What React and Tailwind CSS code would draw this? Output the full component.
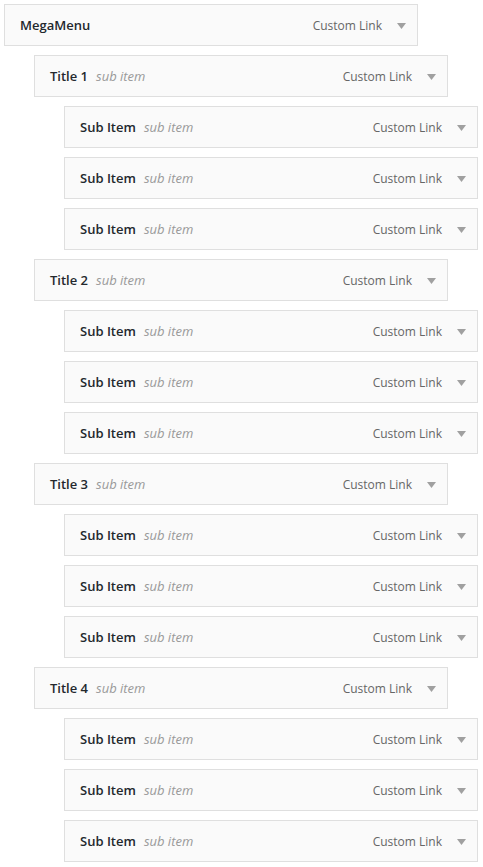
const tree = [
  { title: 'Title 1', subs: 3 },
  { title: 'Title 2', subs: 3 },
  { title: 'Title 3', subs: 3 },
  { title: 'Title 4', subs: 3 },
]

function MenuItem({ label, note, indent }) {
  return (
    <div className={`${indent} w-[414px] h-[42px] mb-[9px] border border-[#dfdfdf] bg-[#fafafa] flex items-center pt-[2px] pl-[15px] pr-[11px]`}>
      <span className="text-[13px] font-semibold text-[#23282d]">{label}</span>
      {note && <span className="ml-[8px] text-[13px] italic text-[#999]">{note}</span>}
      <span className="ml-auto text-[12px] text-[#666]">Custom Link</span>
      <svg width="9" height="6" viewBox="0 0 9 6" className="ml-[15px]">
        <path d="M0 0 H9 L4.5 6 Z" fill="#a0a0a0" />
      </svg>
    </div>
  )
}

export default function App() {
  return (
    <div className="bg-white min-h-[867px] pt-[4px] pl-[4px] font-['Open_Sans',sans-serif]">
      <MenuItem label="MegaMenu" indent="ml-0" />
      {tree.map(({ title, subs }) => (
        <div key={title}>
          <MenuItem label={title} note="sub item" indent="ml-[30px]" />
          {Array.from({ length: subs }).map((_, i) => (
            <MenuItem key={i} label="Sub Item" note="sub item" indent="ml-[60px]" />
          ))}
        </div>
      ))}
    </div>
  )
}
